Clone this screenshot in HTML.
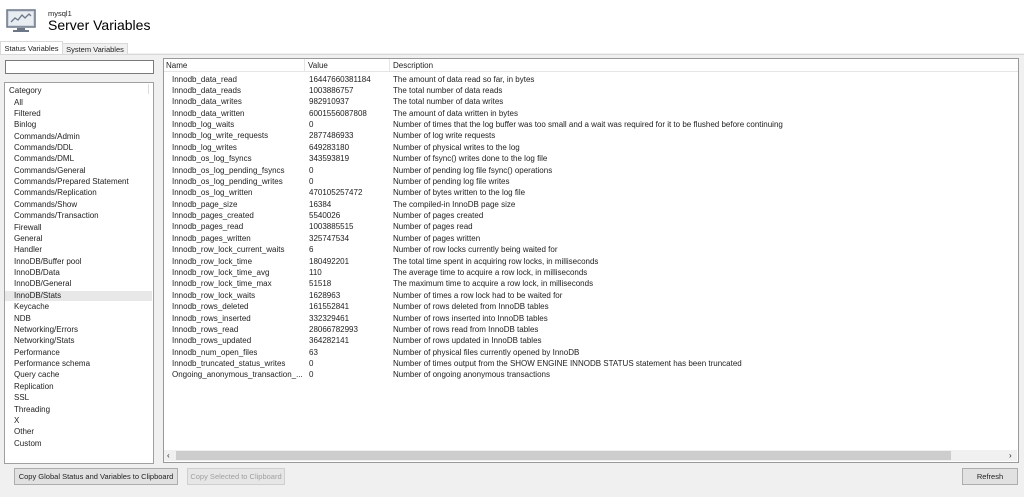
<!DOCTYPE html>
<html><head><style>
body{margin:0;width:1024px;height:497px;background:#fff;font-family:"Liberation Sans",sans-serif;font-size:8px;color:#222;position:relative;overflow:hidden}
.a{position:absolute}
.panel{left:0;top:53px;width:1024px;height:444px;background:#f0f0f0;border-bottom:2px solid #fff}
.box{background:#fff;border:1px solid #a0a0a0}
.r{position:absolute;white-space:nowrap;height:11px;line-height:11px}
.btn{position:absolute;border:1px solid #adadad;background:#e1e1e1;font-size:7.5px;text-align:center;line-height:15px;height:15px}
</style></head><body>
<svg class="a" style="left:6px;top:9px" width="30" height="25" viewBox="0 0 30 25"><rect x="1" y="1" width="28" height="17" fill="#cfd6df" stroke="#6b7786" stroke-width="1.5"/><rect x="3" y="3" width="24" height="13" fill="#e8edf2"/><polyline points="5,13 9,9 12,11 16,6 19,9 23,5 25,7" fill="none" stroke="#6b7786" stroke-width="1.3"/><rect x="11" y="19" width="8" height="2" fill="#6b7786"/><rect x="7" y="21" width="16" height="2" fill="#6b7786"/></svg>
<div class="a" style="left:48px;top:9px;font-size:7.5px">mysql1</div>
<div class="a" style="left:48px;top:17px;font-size:14px;color:#000">Server Variables</div>
<div class="panel a"></div>
<div class="a" style="left:0;top:41px;width:61px;height:13px;background:#fff;border:1px solid #d9d9d9;border-bottom:none;font-size:7.5px;line-height:13px;text-align:center">Status Variables</div>
<div class="a" style="left:62px;top:43px;width:64px;height:10px;background:#f0f0f0;border:1px solid #d9d9d9;font-size:7.5px;line-height:11px;text-align:center">System Variables</div>
<div class="a" style="left:0;top:54px;width:1024px;height:1px;background:#d9d9d9"></div>
<div class="a box" style="left:5px;top:60px;width:147px;height:12px;border-color:#7a7a7a"></div>
<div class="a box" style="left:4px;top:82px;width:148px;height:380px"></div>
<div class="a" style="left:5px;top:291px;width:147px;height:10px;background:#e8e8e8"></div>
<div class="a" style="left:148px;top:84px;width:1px;height:10px;background:#ddd"></div>
<div id="cats"></div>
<div class="a box" style="left:163px;top:58px;width:854px;height:403px;border-color:#999"></div>
<div class="a" style="left:164px;top:59px;width:854px;height:12px;border-bottom:1px solid #e5e5e5"></div>
<div class="a" style="left:304px;top:59px;width:1px;height:12px;background:#e5e5e5"></div>
<div class="a" style="left:389px;top:59px;width:1px;height:12px;background:#e5e5e5"></div>
<div class="r" style="left:166px;top:60px">Name</div>
<div class="r" style="left:308px;top:60px">Value</div>
<div class="r" style="left:393px;top:60px">Description</div>
<div id="rows"></div>
<div class="a" style="left:164px;top:450px;width:853px;height:11px;background:#f0f0f0"></div>
<div class="a" style="left:176px;top:451px;width:775px;height:9px;background:#cdcdcd"></div>
<div class="r" style="left:167px;top:450px;font-size:8px">‹</div>
<div class="r" style="left:1009px;top:450px;font-size:8px">›</div>
<div class="btn" style="left:14px;top:468px;width:162px">Copy Global Status and Variables to Clipboard</div>
<div class="btn" style="left:187px;top:468px;width:96px;color:#a0a0a0;background:#e6e6e6;border-color:#cfcfcf">Copy Selected to Clipboard</div>
<div class="btn" style="left:962px;top:468px;width:54px">Refresh</div>
<script>
var cats=["Category","All","Filtered","Binlog","Commands/Admin","Commands/DDL","Commands/DML","Commands/General","Commands/Prepared Statement","Commands/Replication","Commands/Show","Commands/Transaction","Firewall","General","Handler","InnoDB/Buffer pool","InnoDB/Data","InnoDB/General","InnoDB/Stats","Keycache","NDB","Networking/Errors","Networking/Stats","Performance","Performance schema","Query cache","Replication","SSL","Threading","X","Other","Custom"];
var h="";cats.forEach(function(c,i){h+='<div class="r" style="left:'+(i?14:9)+'px;top:'+(85.1+i*11.37).toFixed(1)+'px">'+c+'</div>'});
document.getElementById('cats').outerHTML=h;
var rows=[["Innodb_data_read","16447660381184","The amount of data read so far, in bytes"],["Innodb_data_reads","1003886757","The total number of data reads"],["Innodb_data_writes","982910937","The total number of data writes"],["Innodb_data_written","6001556087808","The amount of data written in bytes"],["Innodb_log_waits","0","Number of times that the log buffer was too small and a wait was required for it to be flushed before continuing"],["Innodb_log_write_requests","2877486933","Number of log write requests"],["Innodb_log_writes","649283180","Number of physical writes to the log"],["Innodb_os_log_fsyncs","343593819","Number of fsync() writes done to the log file"],["Innodb_os_log_pending_fsyncs","0","Number of pending log file fsync() operations"],["Innodb_os_log_pending_writes","0","Number of pending log file writes"],["Innodb_os_log_written","470105257472","Number of bytes written to the log file"],["Innodb_page_size","16384","The compiled-in InnoDB page size"],["Innodb_pages_created","5540026","Number of pages created"],["Innodb_pages_read","1003885515","Number of pages read"],["Innodb_pages_written","325747534","Number of pages written"],["Innodb_row_lock_current_waits","6","Number of row locks currently being waited for"],["Innodb_row_lock_time","180492201","The total time spent in acquiring row locks, in milliseconds"],["Innodb_row_lock_time_avg","110","The average time to acquire a row lock, in milliseconds"],["Innodb_row_lock_time_max","51518","The maximum time to acquire a row lock, in milliseconds"],["Innodb_row_lock_waits","1628963","Number of times a row lock had to be waited for"],["Innodb_rows_deleted","161552841","Number of rows deleted from InnoDB tables"],["Innodb_rows_inserted","332329461","Number of rows inserted into InnoDB tables"],["Innodb_rows_read","28066782993","Number of rows read from InnoDB tables"],["Innodb_rows_updated","364282141","Number of rows updated in InnoDB tables"],["Innodb_num_open_files","63","Number of physical files currently opened by InnoDB"],["Innodb_truncated_status_writes","0","Number of times output from the SHOW ENGINE INNODB STATUS statement has been truncated"],["Ongoing_anonymous_transaction_...","0","Number of ongoing anonymous transactions"]];
h="";rows.forEach(function(r,i){var t=(73.5+i*11.38).toFixed(1);h+='<div class="r" style="left:172px;top:'+t+'px">'+r[0]+'</div><div class="r" style="left:309px;top:'+t+'px">'+r[1]+'</div><div class="r" style="left:393px;top:'+t+'px">'+r[2]+'</div>'});
document.getElementById('rows').outerHTML=h;
</script>
</body></html>
